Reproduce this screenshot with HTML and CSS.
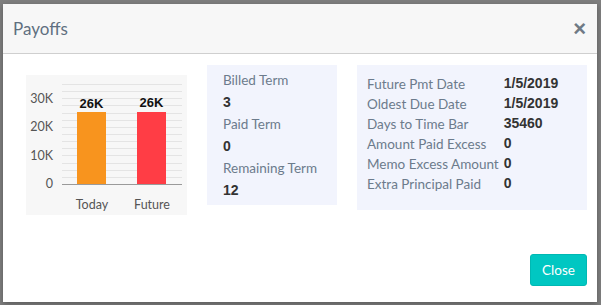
FILE: index.html
```html
<!DOCTYPE html>
<html lang="en">
<head>
    <meta charset="UTF-8">
    <meta name="viewport" content="width=device-width, initial-scale=1.0">
    <title>Payoffs</title>
    <link rel="stylesheet" href="styles.css">
</head>
<body>
    <div class="modal">
        <div class="modal-header">
            <h4 class="modal-title">Payoffs</h4>
            <button class="close">&times;</button>
        </div>
        <div class="modal-body">
            <div class="chart">
                <svg width="161" height="140" viewBox="0 0 161 140">
                    <g stroke="#e4e4e4" stroke-width="1">
                        <line x1="36" x2="156" y1="102.5" y2="102.5"/>
                        <line x1="36" x2="156" y1="95.5" y2="95.5"/>
                        <line x1="36" x2="156" y1="88.5" y2="88.5"/>
                        <line x1="36" x2="156" y1="80.5" y2="80.5"/>
                        <line x1="36" x2="156" y1="73.5" y2="73.5"/>
                        <line x1="36" x2="156" y1="66.5" y2="66.5"/>
                        <line x1="36" x2="156" y1="59.5" y2="59.5"/>
                        <line x1="36" x2="156" y1="52.5" y2="52.5"/>
                        <line x1="36" x2="156" y1="45.5" y2="45.5"/>
                        <line x1="36" x2="156" y1="38.5" y2="38.5"/>
                        <line x1="36" x2="156" y1="30.5" y2="30.5"/>
                        <line x1="36" x2="156" y1="23.5" y2="23.5"/>
                        <line x1="36" x2="156" y1="16.5" y2="16.5"/>
                        <line x1="36" x2="156" y1="9.5" y2="9.5"/>
                    </g>
                    <g class="axis-label" text-anchor="end">
                        <text x="27" y="28">30K</text>
                        <text x="27" y="56">20K</text>
                        <text x="27" y="85">10K</text>
                        <text x="27" y="113">0</text>
                    </g>
                    <rect x="51" y="37" width="29" height="72" fill="#f8941e"/>
                    <rect x="111" y="37" width="29" height="72" fill="#ff3d45"/>
                    <line x1="36" x2="156" y1="109.5" y2="109.5" stroke="#9a9a9a"/>
                    <g class="bar-value" text-anchor="middle">
                        <text x="65.5" y="33">26K</text>
                        <text x="125.5" y="32">26K</text>
                    </g>
                    <g class="axis-label" text-anchor="middle">
                        <text x="66" y="134">Today</text>
                        <text x="126" y="134">Future</text>
                    </g>
                </svg>
            </div>

            <div class="panel terms">
                <div class="term-label">Billed Term</div>
                <div class="term-value">3</div>
                <div class="term-label">Paid Term</div>
                <div class="term-value">0</div>
                <div class="term-label">Remaining Term</div>
                <div class="term-value">12</div>
            </div>

            <div class="panel details">
                <table>
                    <tr><td>Future Pmt Date</td><th>1/5/2019</th></tr>
                    <tr><td>Oldest Due Date</td><th>1/5/2019</th></tr>
                    <tr><td>Days to Time Bar</td><th>35460</th></tr>
                    <tr><td>Amount Paid Excess</td><th>0</th></tr>
                    <tr><td>Memo Excess Amount</td><th>0</th></tr>
                    <tr><td>Extra Principal Paid</td><th>0</th></tr>
                </table>
            </div>
        </div>
        <div class="modal-footer">
            <button class="btn-close">Close</button>
        </div>
    </div>
</body>
</html>
```

FILE: styles.css
```css
* {
    margin: 0;
    padding: 0;
    box-sizing: border-box;
}

body {
    background: #7f7f7f;
    font-family: 'Lato', sans-serif;
    padding: 4px 4px 3px 3px;
}

.modal {
    background: #fff;
    width: 594px;
    height: 298px;
    display: flex;
    flex-direction: column;
    box-shadow: 0 2px 6px rgba(0, 0, 0, 0.3);
}

.modal-header {
    background: #f7f7f7;
    height: 50px;
    border-bottom: 1px solid #cfcfcf;
    display: flex;
    align-items: center;
    justify-content: space-between;
    padding: 0 11px 0 10px;
}

.modal-title {
    font-weight: normal;
    font-size: 17px;
    color: #5f6f80;
}

.close {
    border: none;
    background: none;
    font-family: 'Liberation Sans', sans-serif;
    font-size: 22px;
    font-weight: bold;
    color: #6f7a85;
    line-height: 1;
    cursor: pointer;
}

.modal-body {
    display: flex;
    align-items: flex-start;
    gap: 20px;
    padding: 11px 10px 0 23px;
    flex: 1;
}

.chart {
    background: #f7f7f7;
    width: 161px;
    height: 140px;
    margin-top: 10px;
}

.chart svg {
    display: block;
}

.axis-label {
    font-family: 'Lato', sans-serif;
    font-size: 12.5px;
    fill: #555;
}

.bar-value {
    font-family: 'Liberation Sans', sans-serif;
    font-size: 13px;
    font-weight: bold;
    fill: #111;
}

.panel {
    background: #f2f4fd;
}

.terms {
    width: 130px;
    height: 140px;
    padding: 5px 16px;
}

.term-label {
    font-size: 13.5px;
    line-height: 21px;
    color: #6c7b8c;
    white-space: nowrap;
}

.term-value {
    font-family: 'Liberation Sans', sans-serif;
    font-size: 14px;
    font-weight: bold;
    line-height: 23px;
    color: #333;
}

.details {
    width: 230px;
    height: 145px;
    padding: 9px 10px;
}

.details table {
    border-collapse: collapse;
}

.details td {
    font-size: 13.5px;
    line-height: 20px;
    color: #6c7b8c;
    padding-right: 5px;
    white-space: nowrap;
}

.details th {
    font-family: 'Liberation Sans', sans-serif;
    font-size: 14px;
    font-weight: bold;
    color: #333;
    text-align: left;
    vertical-align: top;
    line-height: 18px;
}

.modal-footer {
    display: flex;
    justify-content: flex-end;
    padding: 0 10px 16px;
}

.btn-close {
    background: #00c7c2;
    color: #fff;
    border: 1px solid #00b8b3;
    border-radius: 3px;
    width: 57px;
    height: 32px;
    font-family: 'Lato', sans-serif;
    font-size: 13.5px;
    cursor: pointer;
}
```
